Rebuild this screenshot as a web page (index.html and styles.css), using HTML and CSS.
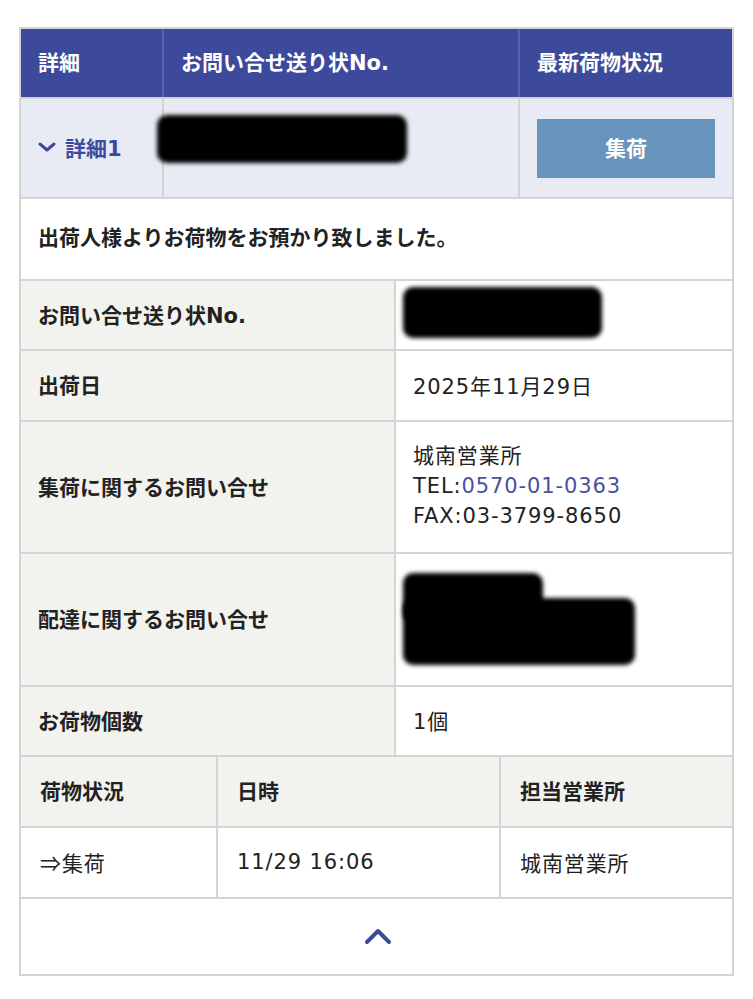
FILE: index.html
```html
<!DOCTYPE html>
<html lang="ja">
<head>
<meta charset="utf-8">
<link rel="stylesheet" href="styles.css">
</head>
<body>
<div class="card">
  <div class="sec sec-top">
    <div class="th">詳細</div>
    <div class="th">お問い合せ送り状No.</div>
    <div class="th">最新荷物状況</div>
    <div class="sum sum-toggle">
      <svg class="chev-down" width="18" height="10" viewBox="0 0 18 10"><polyline points="2,2 9,8 16,2" fill="none" stroke="#3d4a9c" stroke-width="3" stroke-linecap="round" stroke-linejoin="round"/></svg>
      <span>詳細1</span>
    </div>
    <div class="sum sum-no"><div class="redact r1"></div></div>
    <div class="sum sum-btn"><div class="btn">集荷</div></div>
  </div>
  <div class="sec sec-msg">
    <div class="msg">出荷人様よりお荷物をお預かり致しました。</div>
  </div>
  <div class="sec sec-detail">
    <div class="lbl h68">お問い合せ送り状No.</div>
    <div class="val h68"><div class="redact r2"></div></div>
    <div class="lbl h69">出荷日</div>
    <div class="val h69">2025年11月29日</div>
    <div class="lbl h130">集荷に関するお問い合せ</div>
    <div class="val h130"><div class="multi">城南営業所<br>TEL:<span class="link">0570-01-0363</span><br>FAX:03-3799-8650</div></div>
    <div class="lbl h131">配達に関するお問い合せ</div>
    <div class="val h131"><div class="redact r3a"></div><div class="redact r3b"></div></div>
    <div class="lbl h68">お荷物個数</div>
    <div class="val h68">1個</div>
  </div>
  <div class="sec sec-hist">
    <div class="lbl h69 hcell">荷物状況</div>
    <div class="lbl h69 hcell">日時</div>
    <div class="lbl h69 hcell">担当営業所</div>
    <div class="val h69 hcell"><span class="arrow">⇒</span>集荷</div>
    <div class="val h69 hcell">11/29 16:06</div>
    <div class="val h69 hcell">城南営業所</div>
  </div>
  <div class="sec sec-close">
    <div class="close">
      <svg width="28" height="18" viewBox="0 0 28 18"><polyline points="3,15 14,4 25,15" fill="none" stroke="#3d4a9c" stroke-width="4" stroke-linecap="round" stroke-linejoin="round"/></svg>
    </div>
  </div>
</div>
</body>
</html>
```
FILE: styles.css
```css
*, *::before, *::after {
  box-sizing: border-box;
}
html, body {
  margin: 0;
  padding: 0;
  background: #ffffff;
}
body {
  padding: 27px 19px;
  font-family: "DejaVu Sans", "Noto Sans CJK JP", sans-serif;
  font-size: 21px;
  color: #222222;
}
.card {
  width: 715px;
  padding: 2px;
  background: #d4d4d4;
  display: flex;
  flex-direction: column;
  gap: 2px;
}
.sec {
  display: grid;
  gap: 2px;
}
.sec-top {
  grid-template-columns: 141px 354px 212px;
  grid-template-rows: 68px 98px;
  background: #d4d4d4;
}
.th {
  background: #3d4a9c;
  color: #ffffff;
  font-weight: 700;
  display: flex;
  align-items: center;
  padding-left: 17px;
  padding-bottom: 4px;
}
.sec-top .th:nth-child(1),
.sec-top .th:nth-child(2) {
  box-shadow: 2px 0 0 #5561a8;
}
.sum {
  background: #e8ebf4;
  display: flex;
  align-items: center;
  position: relative;
}
.sum-toggle {
  padding-left: 17px;
  color: #3d4a9c;
  font-weight: 700;
  gap: 9px;
  padding-bottom: 2px;
}
.sum-btn {
  padding: 0 17px;
}
.btn {
  flex: 1;
  height: 59px;
  background: #6694bc;
  color: #ffffff;
  font-weight: 700;
  display: flex;
  align-items: center;
  justify-content: center;
  padding-bottom: 2px;
}
.sec-msg .msg {
  background: #ffffff;
  height: 80px;
  display: flex;
  align-items: center;
  padding-left: 17px;
  padding-bottom: 6px;
  font-weight: 700;
}
.sec-detail {
  grid-template-columns: 373px 336px;
}
.sec-hist {
  grid-template-columns: 195px 281px 231px;
}
.lbl {
  background: #f2f2ef;
  font-weight: 700;
  display: flex;
  align-items: center;
  padding-left: 17px;
  padding-bottom: 3px;
}
.val {
  background: #ffffff;
  display: flex;
  align-items: center;
  padding-left: 17px;
  padding-bottom: 2px;
  position: relative;
  letter-spacing: 0.9px;
}
.hcell {
  padding-left: 19px;
}
.multi {
  line-height: 30px;
}
.link {
  color: #4652a0;
}
.arrow {
  font-family: "Noto Sans CJK JP", sans-serif;
}
.h68 { height: 68px; }
.h69 { height: 69px; }
.h130 { height: 130px; }
.h131 { height: 131px; }
.close {
  background: #ffffff;
  height: 75px;
  display: flex;
  align-items: center;
  justify-content: center;
}
.close svg {
  margin-left: 2px;
  margin-bottom: 2px;
}
.redact {
  position: absolute;
  background: #000000;
  border-radius: 10px;
  filter: blur(2px);
}
.r1 { left: -7px; top: 16px; width: 250px; height: 48px; }
.r2 { left: 7px; top: 6px; width: 199px; height: 51px; }
.r3a { left: 7px; top: 19px; width: 140px; height: 50px; }
.r3b { left: 7px; top: 44px; width: 232px; height: 67px; }
```
